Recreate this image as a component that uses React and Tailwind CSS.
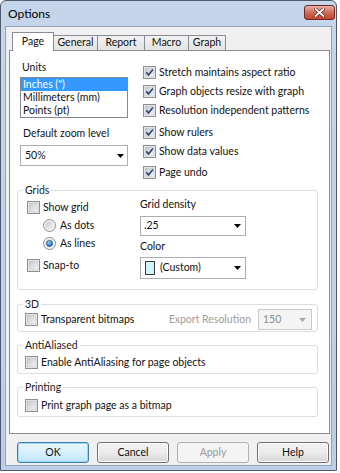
import React from "react";

function Check({ checked }) {
  return (
    <span className="flex h-[13px] w-[13px] shrink-0 items-center justify-center border border-[#8e8f8f] bg-[#f4f4f4]">
      <svg width="11" height="11" viewBox="0 0 11 11">
        <defs>
          <linearGradient id="cbg" x1="0" y1="0" x2="1" y2="1">
            <stop offset="0" stopColor="#c3c7cc" />
            <stop offset="1" stopColor="#f6f6f7" />
          </linearGradient>
        </defs>
        <rect x="1" y="1" width="9" height="9" fill="url(#cbg)" stroke="#b9bcc1" strokeWidth="0.6" />
        {checked && (
          <path d="M2.3 5.4 L4.5 7.9 L8.9 2.4" fill="none" stroke="#2d4478" strokeWidth="1.6" />
        )}
      </svg>
    </span>
  );
}

function Radio({ checked }) {
  return (
    <svg width="13" height="13" viewBox="0 0 13 13" className="shrink-0">
      <defs>
        <linearGradient id="rbg" x1="0" y1="0" x2="1" y2="1">
          <stop offset="0" stopColor="#c6c9ce" />
          <stop offset="1" stopColor="#f7f7f7" />
        </linearGradient>
        <radialGradient id="rdot" cx="0.4" cy="0.35" r="0.7">
          <stop offset="0" stopColor="#a6dcf9" />
          <stop offset="0.6" stopColor="#3d8ad0" />
          <stop offset="1" stopColor="#1c4f84" />
        </radialGradient>
      </defs>
      <circle cx="6.5" cy="6.5" r="6" fill="#f4f4f4" stroke="#8e8f8f" />
      <circle cx="6.5" cy="6.5" r="4.3" fill="url(#rbg)" />
      {checked && <circle cx="6.5" cy="6.5" r="3" fill="url(#rdot)" stroke="#214f7b" strokeWidth="0.6" />}
    </svg>
  );
}

function Arrow({ color = "#000" }) {
  return (
    <svg width="7" height="4" viewBox="0 0 7 4" className="shrink-0">
      <path d="M0 0 H7 L3.5 4 Z" fill={color} />
    </svg>
  );
}

function CheckRow({ checked, children, className = "" }) {
  return (
    <div className={"flex h-[15px] items-center gap-[3px] leading-[15px] " + className}>
      <Check checked={checked} />
      <span className="whitespace-nowrap">{children}</span>
    </div>
  );
}

function Group({ label, className = "", children }) {
  return (
    <fieldset className={"ml-[7px] w-[301px] rounded-[3px] border border-[#d5dfe5] " + className}>
      <legend className="ml-[5px] px-[2px] leading-[14px] text-[#1c1c1c]">{label}</legend>
      {children}
    </fieldset>
  );
}

function Button({ children, variant }) {
  if (variant === "default") {
    return (
      <div className="flex h-[21px] w-[72px] items-center justify-center rounded-[3px] border border-[#3c7fb1] bg-gradient-to-b from-[#eaf6fd] via-[#d9f0fc] to-[#bee6fd] shadow-[inset_0_0_0_1px_#9fd5f7]">
        {children}
      </div>
    );
  }
  if (variant === "disabled") {
    return (
      <div className="flex h-[21px] w-[72px] items-center justify-center rounded-[3px] border border-[#adb2b5] bg-[#f4f4f4] text-[#9a9a9a]">
        {children}
      </div>
    );
  }
  return (
    <div className="flex h-[21px] w-[72px] items-center justify-center rounded-[3px] border border-[#707070] bg-gradient-to-b from-[#f2f2f2] via-[#ebebeb] to-[#d6d6d6] shadow-[inset_0_0_0_1px_#fcfcfc]">
      {children}
    </div>
  );
}

export default function App() {
  return (
    <div className="h-[473px] w-[340px] bg-white font-['Lato','Liberation_Sans',sans-serif] text-[10.5px] text-[#111]">
      <div className="flex h-[471px] w-[337px] flex-col rounded-t-[6px] border border-[#4f5b6a] bg-gradient-to-b from-[#c6d6ea] to-[#bccee6]">
        {/* title bar */}
        <div className="flex h-[25px] items-start justify-between">
          <div className="mt-[5px] pl-[7px] text-[12px] leading-[16px] text-black">Options</div>
          <div className="mr-[1px] mt-[4px] flex h-[15px] w-[31px] items-center justify-center rounded-[3px] border border-[#6b2d25] bg-gradient-to-b from-[#e8b1a5] via-[#d26d5b] to-[#c2412c]">
            <svg width="11" height="9" viewBox="0 0 11 9">
              <path d="M1.5 1 L9.5 8 M9.5 1 L1.5 8" stroke="#5a2018" strokeWidth="3.2" strokeLinecap="round" />
              <path d="M1.5 1 L9.5 8 M9.5 1 L1.5 8" stroke="#ffffff" strokeWidth="1.8" strokeLinecap="round" />
            </svg>
          </div>
        </div>
        {/* client */}
        <div className="mx-[4px] mb-[4px] flex flex-1 flex-col border border-[#8fa3bd] bg-[#f0f0f0]">
          {/* tabs */}
          <div className="mt-[5px] flex h-[18px] items-end pl-[6px]">
            <div className="relative z-10 -mb-px flex h-[19px] w-[42px] items-center justify-center border-x border-t border-[#898c95] bg-white">
              Page
            </div>
            <div className="-ml-px flex h-[15px] w-[45px] items-center justify-center border-x border-t border-[#898c95] bg-gradient-to-b from-[#f2f2f2] to-[#e3e3e3]">
              General
            </div>
            <div className="-ml-px flex h-[15px] w-[48px] items-center justify-center border-x border-t border-[#898c95] bg-gradient-to-b from-[#f2f2f2] to-[#e3e3e3]">
              Report
            </div>
            <div className="-ml-px flex h-[15px] w-[45px] items-center justify-center border-x border-t border-[#898c95] bg-gradient-to-b from-[#f2f2f2] to-[#e3e3e3]">
              Macro
            </div>
            <div className="-ml-px flex h-[15px] w-[38px] items-center justify-center border-x border-t border-[#898c95] bg-gradient-to-b from-[#f2f2f2] to-[#e3e3e3]">
              Graph
            </div>
          </div>

          {/* panel */}
          <div className="ml-[3px] h-[384px] w-[321px] border border-[#898c95] bg-white">
            <div className="flex">
              {/* left column */}
              <div className="ml-[10px] flex w-[108px] flex-col">
                <div className="mt-[9px] h-[15px] pl-[2px] leading-[15px]">Units</div>
                <div className="mt-[2px] flex h-[41px] flex-col border border-[#828790] bg-white">
                  <div className="h-[13px] bg-[#3399ff] pl-[2px] leading-[13px] text-white">Inches (")</div>
                  <div className="h-[13px] pl-[2px] leading-[13px]">Millimeters (mm)</div>
                  <div className="h-[13px] pl-[2px] leading-[13px]">Points (pt)</div>
                </div>
                <div className="mt-[8px] h-[15px] pl-[3px] leading-[15px]">Default zoom level</div>
                <div className="mt-[4px] flex h-[21px] items-center justify-between border border-[#abadb3] bg-white pl-[4px] pr-[3px]">
                  <span>50%</span>
                  <Arrow />
                </div>
              </div>
              {/* right column */}
              <div className="ml-[15px] flex flex-col">
                <CheckRow checked className="mt-[14px]">Stretch maintains aspect ratio</CheckRow>
                <CheckRow checked className="mt-[4px]">Graph objects resize with graph</CheckRow>
                <CheckRow checked className="mt-[4px]">Resolution independent patterns</CheckRow>
                <CheckRow checked className="mt-[7px]">Show rulers</CheckRow>
                <CheckRow checked className="mt-[4px]">Show data values</CheckRow>
                <CheckRow checked className="mt-[6px]">Page undo</CheckRow>
              </div>
            </div>

            {/* Grids */}
            <Group label="Grids" className="mt-[3px]">
              <div className="flex pb-[10px]">
                <div className="ml-[9px] flex w-[113px] flex-col">
                  <CheckRow className="mt-[3px]">Show grid</CheckRow>
                  <div className="ml-[16px] mt-[3px] flex h-[15px] items-center gap-[4px]">
                    <Radio />
                    <span>As dots</span>
                  </div>
                  <div className="ml-[16px] mt-[3px] flex h-[15px] items-center gap-[4px]">
                    <Radio checked />
                    <span>As lines</span>
                  </div>
                  <CheckRow className="mt-[7px]">Snap-to</CheckRow>
                </div>
                <div className="flex w-[106px] flex-col">
                  <div className="h-[15px] leading-[15px]">Grid density</div>
                  <div className="mt-[4px] flex h-[20px] items-center justify-between border border-[#abadb3] bg-white pl-[3px] pr-[4px]">
                    <span>.25</span>
                    <Arrow />
                  </div>
                  <div className="mt-[3px] h-[15px] leading-[15px]">Color</div>
                  <div className="mt-[3px] flex h-[22px] items-center justify-between border border-[#abadb3] bg-white pl-[4px] pr-[4px]">
                    <div className="flex items-center gap-[5px]">
                      <span className="h-[14px] w-[10px] border border-[#3a3a3a] bg-[#cff3fa]" />
                      <span>(Custom)</span>
                    </div>
                    <Arrow />
                  </div>
                </div>
              </div>
            </Group>

            {/* 3D */}
            <Group label="3D" className="mt-[7px]">
              <div className="-mt-[2px] mb-[1px] flex h-[21px] items-center">
                <CheckRow className="ml-[7px]">Transparent bitmaps</CheckRow>
                <span className="ml-auto text-[#9d9d9d]">Export Resolution</span>
                <div className="ml-[7px] mr-[5px] flex h-[21px] w-[54px] items-center justify-between border border-[#c9c9c9] bg-[#f4f4f4] pl-[4px] pr-[5px] text-[#8d8d8d]">
                  <span>150</span>
                  <Arrow color="#a8a8a8" />
                </div>
              </div>
            </Group>

            {/* AntiAliased */}
            <Group label="AntiAliased" className="mt-[6px]">
              <CheckRow className="mb-[3px] ml-[7px] mt-[3px]">Enable AntiAliasing for page objects</CheckRow>
            </Group>

            {/* Printing */}
            <Group label="Printing" className="mt-[6px]">
              <CheckRow className="mb-[3px] ml-[7px] mt-[4px]">Print graph page as a bitmap</CheckRow>
            </Group>
          </div>

          {/* buttons */}
          <div className="mt-[8px] flex gap-[8px] pl-[11px]">
            <Button variant="default">OK</Button>
            <Button>Cancel</Button>
            <Button variant="disabled">Apply</Button>
            <Button>Help</Button>
          </div>
        </div>
      </div>
    </div>
  );
}
